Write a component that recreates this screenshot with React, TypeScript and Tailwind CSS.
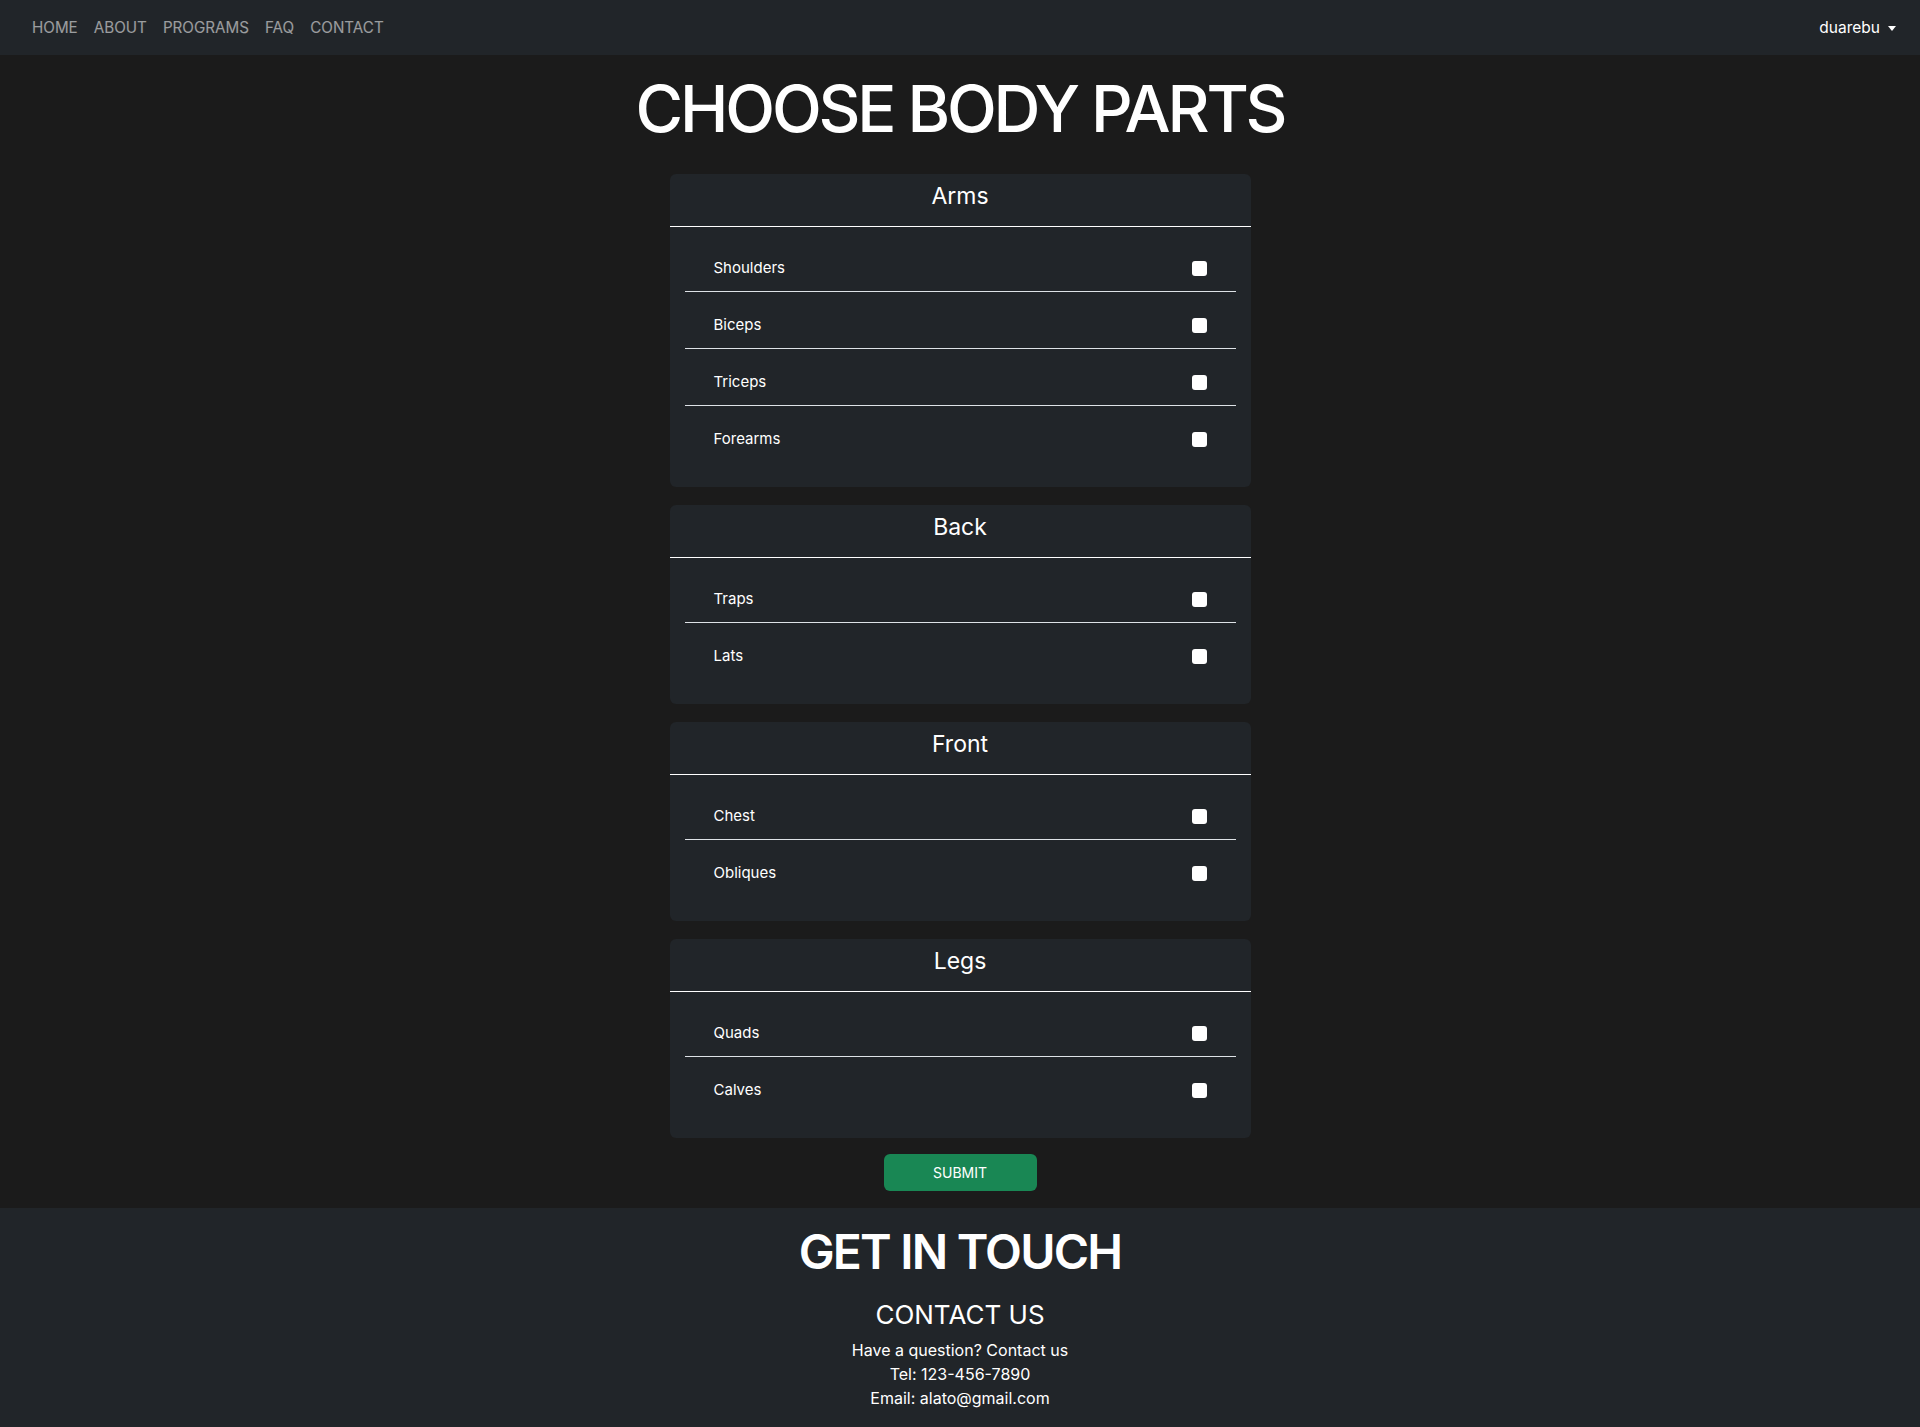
const groups = [
  { title: "Arms", parts: ["Shoulders", "Biceps", "Triceps", "Forearms"] },
  { title: "Back", parts: ["Traps", "Lats"] },
  { title: "Front", parts: ["Chest", "Obliques"] },
  { title: "Legs", parts: ["Quads", "Calves"] },
];

const navLinks = ["HOME", "ABOUT", "PROGRAMS", "FAQ", "CONTACT"];

export default function App() {
  return (
    <div className="min-h-[1427px] bg-[#1b1b1b] text-white font-['Inter','Liberation_Sans',sans-serif] flex flex-col">
      {/* navbar */}
      <nav className="h-[55px] bg-[#212529] flex items-center justify-between pl-[24px] pr-[24px]">
        <ul className="flex items-center">
          {navLinks.map((link) => (
            <li key={link}>
              <a href="#" className="block px-[8px] pt-[1px] text-[15.2px] text-white/55">
                {link}
              </a>
            </li>
          ))}
        </ul>
        <button className="flex items-center gap-[8px] pt-[1px] text-[15.5px] text-white">
          duarebu
          <span className="w-0 h-0 border-l-[4px] border-r-[4px] border-t-[5px] border-l-transparent border-r-transparent border-t-white" />
        </button>
      </nav>

      <main className="flex flex-col items-center">
        <h1 className="mt-[11px] mb-[22px] text-[65px] leading-[86px] font-medium tracking-[-3.2px]">
          CHOOSE BODY PARTS
        </h1>

        <form className="w-[581px] flex flex-col gap-[18px]">
          {groups.map((group) => (
            <div key={group.title} className="bg-[#212529] rounded-[6px]">
              <div className="h-[53px] pt-[8px] border-b border-white text-center text-[23px] leading-[29px]">
                {group.title}
              </div>
              <ul className="px-[15px] pt-[8px] pb-[24px]">
                {group.parts.map((part, i) => (
                  <li
                    key={part}
                    className={`h-[57px] pt-[10px] flex items-center justify-between pl-[29px] pr-[29px] ${
                      i < group.parts.length - 1 ? "border-b border-[#dee2e6]" : ""
                    }`}
                  >
                    <span className="text-[15px]">{part}</span>
                    <span className="w-[15px] h-[15px] rounded-[3px] bg-white" />
                  </li>
                ))}
              </ul>
            </div>
          ))}
          <div className="flex justify-center -mt-[2px] mb-[17px]">
            <button
              type="button"
              className="w-[153px] h-[37px] rounded-[6px] bg-[#198754] text-[14px] text-white"
            >
              SUBMIT
            </button>
          </div>
        </form>
      </main>

      {/* footer */}
      <footer className="flex-1 bg-[#212529] flex flex-col items-center pt-[12px]">
        <h2 className="text-[48px] leading-[64px] font-semibold tracking-[-1.8px]">GET IN TOUCH</h2>
        <h3 className="mt-[13px] text-[26px] leading-[36px]">CONTACT US</h3>
        <p className="mt-[5px] text-[16px] leading-[24px]">Have a question? Contact us</p>
        <p className="text-[16px] leading-[24px]">Tel: 123-456-7890</p>
        <p className="text-[16px] leading-[24px]">Email: alato@gmail.com</p>
      </footer>
    </div>
  );
}
